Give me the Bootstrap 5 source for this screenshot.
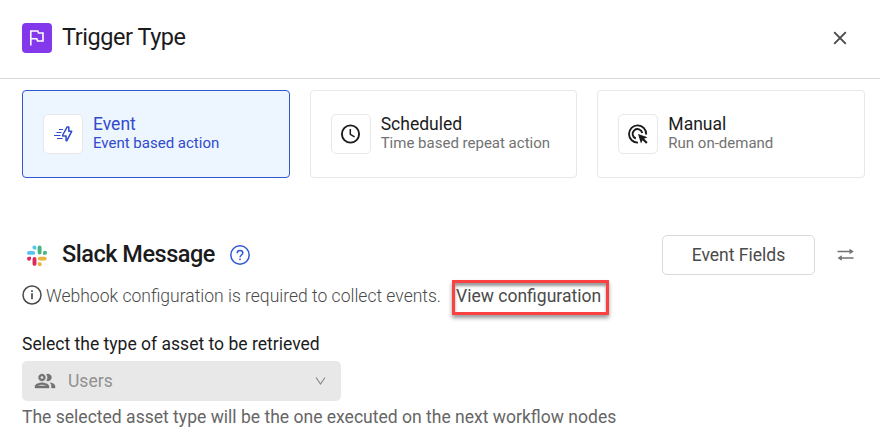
<!DOCTYPE html>
<html lang="en">
<head>
<meta charset="utf-8">
<meta name="viewport" content="width=device-width, initial-scale=1">
<title>Trigger Type</title>
<link href="https://cdn.jsdelivr.net/npm/bootstrap@5.3.0/dist/css/bootstrap.min.css" rel="stylesheet">
<style>
body{font-family:Roboto,"Liberation Sans",sans-serif;font-size:17.540px;line-height:24px;color:#1b1b1d;background:#fff;overflow:hidden}
svg{display:block;flex:none}
.panel-head{height:79px;padding:0 25px 3px 22px;border-bottom:1px solid #d9d9d9}
.head-icon{width:30px;height:30px;border-radius:4px;background:#8338ec}
.head-title{font-size:23.500px;letter-spacing:-.45px;line-height:30px;font-weight:400;margin-left:10px;padding-bottom:1px}
.close-btn{width:30px;height:30px;padding:0;border:0;background:none}
.panel-main{padding:11px 15px 0 22px}
.options{gap:20px}
.option{flex:1 1 0;height:88px;padding:0 20px;border:1px solid #e8e8e8;border-radius:4px;background:#fff}
.option.active{border-color:#3059d0;background:#edf5ff;color:#304bcb}
.option-icon{width:40px;height:40px;border:1px solid #e8e8e8;border-radius:5px;background:#fff}
.option-text{margin-left:10px;padding-bottom:3px}
.option-name{line-height:20px}
.option-desc{font-size:15px;line-height:18px;color:#727272}
.active .option-desc{color:#304bcb}
.source{height:40px;margin-top:57px}
.source-title{font-size:23.500px;letter-spacing:-.48px;line-height:30px;font-weight:500;margin-left:15px;padding-bottom:2px}
.help-icon{margin-left:15px}
.fields-btn{width:153px;height:40px;border:1px solid #d9d9d9;border-radius:5px;background:#fff;color:#4a4a4a;padding:0}
.swap-icon{margin-left:16px;margin-right:-1px}
.notice{height:35px;margin-top:5px;color:#4a4a4a;font-weight:300}
.notice-text{width:395px;margin-left:4px;padding-bottom:4px}
.info-icon{margin-bottom:5px}
.config-link{width:157px;height:35px;margin-left:11px;border:3px solid #fb4142;color:#4a4a4a;font-weight:400;text-decoration:none;white-space:nowrap;line-height:24px;padding:1px 0 0 1px;box-shadow:0 3px 4px rgba(0,0,0,.4),inset 0 3px 3px rgba(0,0,0,.4)}
.asset-label{margin-top:17px;line-height:24px}
.asset-select{width:319px;height:40px;margin-top:5px;padding:0 13px 0 11px;border-radius:5px;background:#e8e8e8;color:#919191}
.users-text{margin-left:11px}
.asset-help{color:#666;margin-top:4px}
</style>
<script src="https://cdn.jsdelivr.net/npm/bootstrap@5.3.0/dist/js/bootstrap.bundle.min.js"></script>
</head>
<body>
<header class="panel-head d-flex align-items-center">
  <span class="head-icon d-flex align-items-center justify-content-center">
    <svg width="30" height="30" viewBox="0 0 30 30" fill="none" stroke="#fff" stroke-width="1.6"><path d="M8.800 22.500V8h7l.7 2H21v8h-5.500l-.7-2.200H8.800"/></svg>
  </span>
  <h1 class="head-title mb-0">Trigger Type</h1>
  <button class="close-btn ms-auto" aria-label="Close"><svg width="30" height="30" viewBox="0 0 30 30" stroke="#4a4a4a" stroke-width="1.900"><path d="M9.200 9.200l11.600 11.600M20.800 9.200L9.200 20.800"/></svg></button>
</header>
<main class="panel-main">
  <div class="options d-flex">
    <div class="option active d-flex align-items-center">
      <span class="option-icon d-flex align-items-center justify-content-center">
        <svg width="20" height="20" viewBox="0 0 20 20" fill="none" stroke="#304bcb"><path d="M14.200 2.900h1.600v4.400h2.900l-4.800 9.400h-.8v-4.800H9.700V11z" stroke-width="1.500" stroke-linejoin="round"/><path d="M6 5.500h4M3.500 8.500h5M1 11.500h6.500M4 14.500h5.500" stroke-width="1.100"/></svg>
      </span>
      <div class="option-text"><div class="option-name">Event</div><div class="option-desc">Event based action</div></div>
    </div>
    <div class="option d-flex align-items-center">
      <span class="option-icon d-flex align-items-center justify-content-center">
        <svg width="24" height="24" viewBox="0 0 24 24" fill="none" stroke="#1b1b1d"><circle cx="11.500" cy="12" r="8.600" stroke-width="1.900"/><path d="M11.300 7v5.400l4.300 2.500" stroke-width="1.500"/></svg>
      </span>
      <div class="option-text"><div class="option-name">Scheduled</div><div class="option-desc">Time based repeat action</div></div>
    </div>
    <div class="option d-flex align-items-center">
      <span class="option-icon d-flex align-items-center justify-content-center">
        <svg width="24" height="24" viewBox="0 0 24 24" fill="none" stroke="#1b1b1d" stroke-width="1.900"><path d="M12 20.600A8.600 8.600 0 1 1 20.200 12.500M9.800 16.500A4.900 4.900 0 1 1 16.300 11"/><path d="M12 12l9.500 3.200-3.400 1.600 3.500 3.500-1.500 1.500-3.500-3.500-1.600 3.200z" fill="#1b1b1d" stroke="none"/></svg>
      </span>
      <div class="option-text"><div class="option-name">Manual</div><div class="option-desc">Run on-demand</div></div>
    </div>
  </div>

  <section class="source d-flex align-items-center">
    <svg width="25" height="25" viewBox="0 0 25 25"><g stroke-width="3.900" stroke-linecap="round" fill="none"><path d="M6.900 9.900h4.300" stroke="#55c5ef"/><path d="M17.600 4.400v5.200" stroke="#46b583"/><path d="M17.800 15.600h4.900" stroke="#eab33a"/><path d="M12.500 15.900v5" stroke="#df285b"/></g><path d="M14.400 6.400V4.300a2 2 0 1 0-2 2.100z" fill="#55c5ef"/><path d="M21 11.800h2a2 2 0 1 0-2-2z" fill="#46b583"/><path d="M15.800 19.200v2a2 2 0 1 0 2-2z" fill="#eab33a"/><path d="M9 13.700H7a2 2 0 1 0 2 2z" fill="#df285b"/></svg>
    <h2 class="source-title mb-0">Slack Message</h2>
    <svg class="help-icon" width="20" height="20" viewBox="0 0 20 20" fill="none" stroke="#3059d0" stroke-width="1.500"><circle cx="10" cy="10" r="9.200"/><path d="M7.200 8.200c0-1.700 1.200-2.700 2.800-2.700s2.800 1 2.800 2.500c0 2-2.800 2-2.800 4.300"/><path d="M10 13.500v1.700"/></svg>
    <button class="fields-btn ms-auto">Event Fields</button>
    <svg class="swap-icon" width="35" height="30" viewBox="0 0 35 30" fill="#727272" stroke="#727272" stroke-width="1.500"><path d="M6.500 11.500h13M9.500 18h13"/><path d="M18.500 8.800l4.300 2.700-4.300 2.700zM10.800 15.300l-4.300 2.700 4.300 2.700z" stroke="none"/></svg>
  </section>

  <div class="notice d-flex align-items-center">
    <svg class="info-icon" width="20" height="20" viewBox="0 0 20 20" fill="none" stroke="#4a4a4a" stroke-width="1.500"><circle cx="10" cy="10" r="9"/><path d="M10 8.300v6M10 5.200V7" stroke-width="1.700"/></svg>
    <span class="notice-text text-nowrap">Webhook configuration is required to collect events.</span>
    <a class="config-link" href="#">View configuration</a>
  </div>

  <div class="asset-label">Select the type of asset to be retrieved</div>
  <div class="asset-select d-flex align-items-center">
    <svg width="24" height="24" viewBox="0 0 24 24" fill="#727272" stroke="#727272" stroke-width=".4"><path d="M9 13.750c-2.340 0-7 1.170-7 3.500V19h14v-1.750c0-2.330-4.660-3.500-7-3.500zM4.340 17c.84-.58 2.870-1.250 4.660-1.250s3.820.67 4.660 1.250H4.340zM9 12c1.930 0 3.500-1.570 3.500-3.500S10.930 5 9 5 5.500 6.570 5.500 8.500 7.070 12 9 12zm0-5c.83 0 1.500.67 1.500 1.500S9.830 10 9 10s-1.500-.67-1.500-1.500S8.170 7 9 7zm8.040 6.810c1.160.84 1.460 1.960 1.460 3.440V19H22v-1.750c0-2.020-2.500-3.170-4.960-3.440zM15 12c1.930 0 3.500-1.570 3.500-3.500S16.930 5 15 5c-.54 0-1.040.13-1.500.35.63.89 1 1.980 1 3.150s-.37 2.260-1 3.150c.46.22.96.35 1.500.35z"/></svg>
    <span class="users-text">Users</span>
    <svg class="ms-auto" width="14" height="14" viewBox="0 0 14 14" fill="none" stroke="#858585" stroke-width="1.100"><path d="M2 3.500l4.500 6.500L11 3.500"/></svg>
  </div>
  <div class="asset-help">The selected asset type will be the one executed on the next workflow nodes</div>
</main>
</body>
</html>
